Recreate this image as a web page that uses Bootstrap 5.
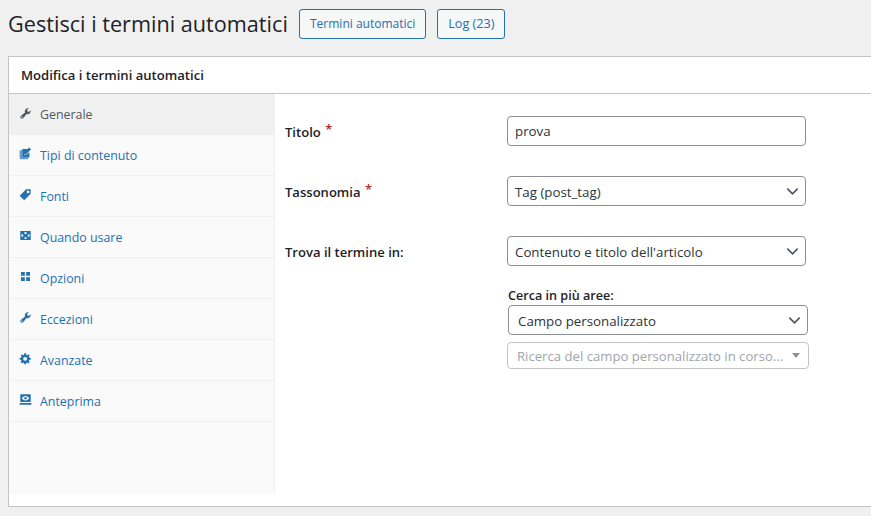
<!DOCTYPE html>
<html lang="it">
<head>
    <meta charset="UTF-8">
    <meta name="viewport" content="width=device-width, initial-scale=1.0">
    <title>Gestisci i termini automatici</title>
    <link href="https://cdn.jsdelivr.net/npm/bootstrap@5.3.0/dist/css/bootstrap.min.css" rel="stylesheet">
    <style>
        html, body { height: 516px; overflow: hidden; }
        body { background: #f0f0f1; color: #1d2327; font-family: "Open Sans", "Noto Sans", sans-serif; font-size: 13px; }
        .page-top { height: 56px; padding: 9px 0 0 8px; gap: 11px; }
        .page-top h1 { font-size: 21.65px; font-weight: 400; line-height: 30px; margin: 0; width: 280px; white-space: nowrap; }
        .top-btn { height: 30px; padding: 0 10px; font-size: 12px; line-height: 28px; color: #2271b1; border: 1px solid #2271b1; border-radius: 3px; background: #f6f7f7; }
        .log-btn { font-size: 12.6px; }
        .edit-box { margin-left: 8px; width: 900px; height: 451px; border: 1px solid #c3c4c7; border-radius: 0; background: #fff; }
        .edit-box-head { height: 37px; padding: 0 12px; border-bottom: 1px solid #c3c4c7; font-size: 13.1px; font-weight: 600; line-height: 36px; }
        .side-tabs { width: 266px; height: 400px; background: #fafafa; border-right: 1px solid #f0f0f1; }
        .side-tab { height: 41px; padding: 2px 0 0 10px; gap: 8px; color: #2271b1; border-bottom: 1px solid #f0f0f1; text-decoration: none; font-size: 12.4px; }
        .side-tab.on { color: #50575e; background: #f0f0f1; border-bottom: 0; }
        .side-tab svg { width: 13px; height: 13px; flex: none; fill: currentColor; margin-top: -5px; }
        .form-area { padding: 22px 0 0 10px; }
        .field-row { height: 60px; }
        .field-lbl { width: 222px; font-size: 13.05px; font-weight: 600; padding-top: 6px; line-height: 20px; }
        .field-lbl sup { color: #b32d2e; font-size: 13px; top: -3px; margin-left: 1px; }
        .wp-ctl { width: 299px; height: 30px; min-height: 30px; padding: 1px 24px 0 7px; font-size: 13.3px; line-height: 28px; color: #2c3338; border: 1px solid #8c8f94; border-radius: 4px; box-shadow: none; background-color: #fff; }
        select.wp-ctl { background-position: right 5px center; background-size: 15px 15px; background-image: url("data:image/svg+xml,%3csvg xmlns='http://www.w3.org/2000/svg' viewBox='0 0 16 16'%3e%3cpath fill='none' stroke='%2350575e' stroke-linecap='round' stroke-width='1.8' d='m3 5.500 5 5 5-5'/%3e%3c/svg%3e"); }
        input.wp-ctl { padding-top: 0; }
        .extra-area { margin-left: 222px; margin-top: -9px; }
        .extra-lbl { font-size: 12.6px; font-weight: 600; line-height: 18px; margin: 0 0 0 1px; }
        .extra-sel { margin-left: 1px; width: 300px; padding-left: 9px; }
        .fake-select { width: 302px; height: 27px; margin-top: 7px; padding: 0 8px 0 9px; color: #a0a5aa; border: 1px solid #c3c4c7; border-radius: 4px; font-size: 13.15px; white-space: nowrap; }
        .fake-select span:first-child { padding-top: 3px; }
        .fake-caret { width: 0; height: 0; border-left: 4px solid transparent; border-right: 4px solid transparent; border-top: 5px solid #8c8f94; }
    </style>
</head>
<body>
    <div class="page-top d-flex align-items-start">
        <h1>Gestisci i termini automatici</h1>
        <a href="#" class="btn top-btn">Termini automatici</a>
        <a href="#" class="btn top-btn log-btn">Log (23)</a>
    </div>

    <div class="card edit-box">
        <div class="edit-box-head">Modifica i termini automatici</div>
        <div class="d-flex">
            <!-- Schede laterali -->
            <div class="side-tabs d-flex flex-column">
                <a href="#" class="side-tab on d-flex align-items-center">
                    <svg viewBox="0 0 20 20"><path d="M16.68 9.77c-1.34 1.34-3.3 1.67-4.95.99l-5.41 6.52c-.99.99-2.59.99-3.58 0s-.99-2.59 0-3.57l6.52-5.42c-.68-1.65-.35-3.61.99-4.95 1.28-1.28 3.12-1.62 4.72-1.06l-2.89 2.89 2.82 2.82 2.86-2.87c.53 1.58.18 3.39-1.08 4.65zM3.81 16.21c.4.39 1.04.39 1.43 0 .4-.4.4-1.04 0-1.43-.39-.4-1.03-.4-1.43 0-.39.39-.39 1.03 0 1.43z"/></svg>
                    Generale
                </a>
                <a href="#" class="side-tab d-flex align-items-center">
                    <svg viewBox="0 0 20 20"><path fill-opacity=".7" d="M1 5h4v11h9v3H3a2 2 0 0 1-2-2z"/><path d="M5 3h8.500l-5 5-1 4.500 4.500-1 4-4V16H5zM15.500 .8l3 3-7.500 7.500-3.500.7.700-3.500z"/></svg>
                    Tipi di contenuto
                </a>
                <a href="#" class="side-tab d-flex align-items-center">
                    <svg viewBox="0 0 20 20"><path d="M11 2h7v7L8 19l-7-7zm3 6c1.100 0 2-.9 2-2s-.9-2-2-2-2 .9-2 2 .9 2 2 2z"/></svg>
                    Fonti
                </a>
                <a href="#" class="side-tab d-flex align-items-center">
                    <svg viewBox="0 0 20 20"><path fill-rule="evenodd" d="M2 3h16v14H2zM8.500 4.500v3h3v-3zM8.500 12.500v3h3v-3zM3.500 8.500v3h3v-3zM13.500 8.500v3h3v-3z"/></svg>
                    Quando usare
                </a>
                <a href="#" class="side-tab d-flex align-items-center">
                    <svg viewBox="0 0 20 20"><path d="M9 9V3H3v6h6zm8 0V3h-6v6h6zm-8 8v-6H3v6h6zm8 0v-6h-6v6h6z"/></svg>
                    Opzioni
                </a>
                <a href="#" class="side-tab d-flex align-items-center">
                    <svg viewBox="0 0 20 20"><path d="M16.68 9.77c-1.34 1.34-3.3 1.67-4.95.99l-5.41 6.52c-.99.99-2.59.99-3.58 0s-.99-2.59 0-3.57l6.52-5.42c-.68-1.65-.35-3.61.99-4.95 1.28-1.28 3.12-1.62 4.72-1.06l-2.89 2.89 2.82 2.82 2.86-2.87c.53 1.58.18 3.39-1.08 4.65zM3.81 16.21c.4.39 1.04.39 1.43 0 .4-.4.4-1.04 0-1.43-.39-.4-1.03-.4-1.43 0-.39.39-.39 1.03 0 1.43z"/></svg>
                    Eccezioni
                </a>
                <a href="#" class="side-tab d-flex align-items-center">
                    <svg viewBox="0 0 20 20"><path d="M18 12h-2.180c-.17.7-.44 1.350-.81 1.930l1.540 1.540-2.100 2.100-1.540-1.540c-.58.36-1.230.63-1.910.79V19H8v-2.180c-.68-.16-1.330-.43-1.910-.79l-1.540 1.540-2.120-2.120 1.540-1.540c-.36-.58-.63-1.230-.79-1.910H1V9.030h2.170c.16-.7.44-1.350.8-1.940L2.430 5.550l2.100-2.100 1.540 1.540c.58-.37 1.240-.64 1.930-.81V2h3v2.180c.68.16 1.330.43 1.910.79l1.540-1.540 2.120 2.120-1.540 1.540c.36.59.64 1.240.8 1.940H18V12zm-8.500 1.500c1.660 0 3-1.340 3-3s-1.340-3-3-3-3 1.340-3 3 1.340 3 3 3z"/></svg>
                    Avanzate
                </a>
                <a href="#" class="side-tab d-flex align-items-center">
                    <svg viewBox="0 0 20 20"><path fill-rule="evenodd" d="M3 2h14a1 1 0 0 1 1 1v11H2V3a1 1 0 0 1 1-1zm7 2.500C7.500 4.500 5.500 6 4.500 8 5.500 10 7.500 11.500 10 11.500S14.500 10 15.500 8C14.500 6 12.500 4.500 10 4.500zm0 1.500a2 2 0 1 1 0 4 2 2 0 0 1 0-4zM1 15.500h18V18H1z"/></svg>
                    Anteprima
                </a>
            </div>

            <!-- Campi del modulo -->
            <form class="form-area flex-grow-1">
                <div class="field-row d-flex align-items-start">
                    <label class="field-lbl" for="titolo">Titolo <sup>*</sup></label>
                    <input id="titolo" type="text" class="form-control wp-ctl" value="prova">
                </div>
                <div class="field-row d-flex align-items-start">
                    <label class="field-lbl" for="tassonomia">Tassonomia <sup>*</sup></label>
                    <select id="tassonomia" class="form-select wp-ctl"><option>Tag (post_tag)</option></select>
                </div>
                <div class="field-row d-flex align-items-start">
                    <label class="field-lbl" for="trova">Trova il termine in:</label>
                    <select id="trova" class="form-select wp-ctl"><option>Contenuto e titolo dell'articolo</option></select>
                </div>
                <div class="extra-area">
                    <div class="extra-lbl">Cerca in più aree:</div>
                    <select class="form-select wp-ctl extra-sel"><option>Campo personalizzato</option></select>
                    <div class="fake-select d-flex align-items-center justify-content-between">
                        <span>Ricerca del campo personalizzato in corso...</span>
                        <span class="fake-caret"></span>
                    </div>
                </div>
            </form>
        </div>
    </div>

    <script src="https://cdn.jsdelivr.net/npm/bootstrap@5.3.0/dist/js/bootstrap.bundle.min.js"></script>
</body>
</html>
